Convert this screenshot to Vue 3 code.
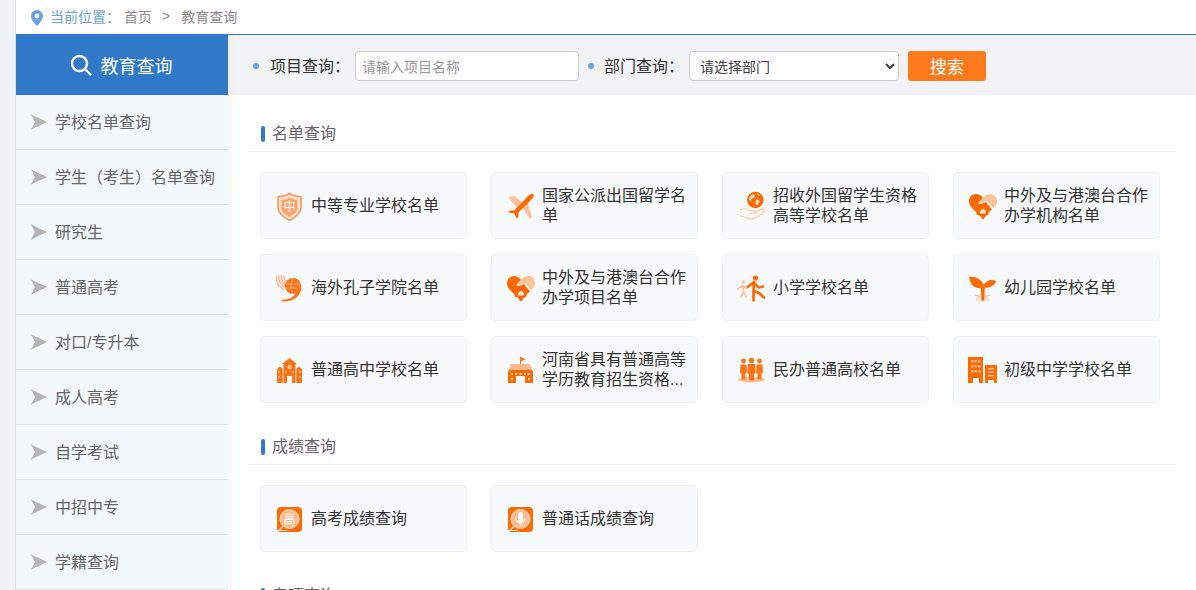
<script setup>
const sideItems = ['学校名单查询', '学生（考生）名单查询', '研究生', '普通高考', '对口/专升本', '成人高考', '自学考试', '中招中专', '学籍查询']
const sections = [
  {
    title: '名单查询',
    cards: [
      { icon: 'shield', text: '中等专业学校名单' },
      { icon: 'plane', text: '国家公派出国留学名单' },
      { icon: 'globe', text: '招收外国留学生资格高等学校名单' },
      { icon: 'heart', text: '中外及与港澳台合作办学机构名单' },
      { icon: 'swirl', text: '海外孔子学院名单' },
      { icon: 'heart', text: '中外及与港澳台合作办学项目名单' },
      { icon: 'run', text: '小学学校名单' },
      { icon: 'sprout', text: '幼儿园学校名单' },
      { icon: 'school', text: '普通高中学校名单' },
      { icon: 'flagschool', text: '河南省具有普通高等学历教育招生资格...' },
      { icon: 'people', text: '民办普通高校名单' },
      { icon: 'tower', text: '初级中学学校名单' }
    ]
  },
  {
    title: '成绩查询',
    cards: [
      { icon: 'gao', text: '高考成绩查询' },
      { icon: 'mic', text: '普通话成绩查询' }
    ]
  },
  { title: '专项查询', cards: [] }
]
</script>

<template>
  <div class="page">
    <div class="strip"></div>
    <div class="frame">
      <div class="crumb">
        <svg class="pin" width="12" height="16" viewBox="0 0 12 16">
          <path fill="#6aa3de" fill-rule="evenodd" d="M6 0a6 6 0 0 1 6 6c0 3.600-4 8-6 10C4 14 0 9.600 0 6a6 6 0 0 1 6-6zm0 3.600a2.400 2.400 0 1 0 0 4.800 2.400 2.400 0 0 0 0-4.800z"/>
        </svg>
        <span class="crumb-text">
          <span class="crumb-label">当前位置：</span>
          <span class="crumb-link">首页</span>
          <span class="crumb-sep">&gt;</span>
          <span class="crumb-link">教育查询</span>
        </span>
      </div>
      <div class="body">
        <aside class="side">
          <div class="side-head">
            <svg width="22" height="22" viewBox="0 0 22 22" fill="none" stroke="#fff" stroke-width="2.400" stroke-linecap="round">
              <circle cx="9.500" cy="9.500" r="7.500"/>
              <path d="M15.500 15.500l4.800 4.800"/>
            </svg>
            <span>教育查询</span>
          </div>
          <div v-for="item in sideItems" :key="item" class="side-item">
            <svg width="16" height="16" viewBox="0 0 16 16"><path fill="#b4b4b4" d="M0 .5 16 8 0 15.500 4 8z"/></svg>
            <span class="side-text">{{ item }}</span>
          </div>
        </aside>
        <main class="main">
          <div class="search">
            <i class="dot"></i>
            <label class="lbl">项目查询：</label>
            <input class="inp" placeholder="请输入项目名称" />
            <i class="dot dot2"></i>
            <label class="lbl">部门查询：</label>
            <select class="sel"><option>请选择部门</option></select>
            <button class="btn">搜索</button>
          </div>
          <div class="content">
            <section v-for="s in sections" :key="s.title" class="sec">
              <h3 class="sec-head"><i class="bar"></i><span class="sec-title">{{ s.title }}</span></h3>
              <div v-if="s.cards.length" class="grid">
                <div v-for="c in s.cards" :key="c.text" class="card">
                  <svg class="ic" width="30" height="30" viewBox="0 0 30 30">
                    <template v-if="c.icon === 'shield'">
                      <path fill="#ffe2cf" stroke="#ff9a5c" stroke-width="1.600" d="M14.500 2.500c3 2.200 6.500 3 11.500 3.200v10.500c0 6-5 9.800-11.500 13.300C8 26 3 22.200 3 16.200V5.700C8 5.500 11.500 4.700 14.500 2.500z"/>
                      <path fill="#ffa670" d="M14.500 6.500c2.500 1.500 5 2.200 8 2.400v7.500c0 4.200-3.300 7-8 9.500-4.700-2.500-8-5.300-8-9.500V8.900c3-.2 5.500-.9 8-2.400z"/>
                      <text x="14.500" y="20" text-anchor="middle" class="ictxt" font-size="12" fill="#fff">中</text>
                    </template>
                    <template v-else-if="c.icon === 'plane'">
                      <path fill="#ffc19a" d="M2 6l6-1 11 8-6 6zM16.500 17l5-5.500L26 26l-2 2z"/>
                      <path fill="#ff6a00" d="M27.200 3c1.300 1 .3 3.400-1.200 5L12.500 21.500l-.2 4.700-1.600 1.300-2.400-5-6.300-1.200 1.500-1.600 4.700-.2L22 5c1.500-1.500 4-3 5.200-2z"/>
                    </template>
                    <template v-else-if="c.icon === 'globe'">
                      <circle cx="18.300" cy="9" r="8.300" fill="#ff6a00"/>
                      <path fill="#ffe2cf" d="M14.500 3.500l3.500.5-.5 2.500-2.500 1-1.500 3-1.500-3zM19 8l3 1 .5 2-2.500 3.500-1.500-1.500zM20.500 2.500l2.500 1.500-1.500 1z"/>
                      <path fill="none" stroke="#ffc7a3" stroke-width="1.100" stroke-linejoin="round" d="M3 19c3-2 6-1.500 9 0l5 1c2 .2 2 2.200 0 2.200h-5M17 21l8-3c2-.5 3 1 2 2-3 4-7 7-12 8-4 0-8-3-12-3"/>
                    </template>
                    <template v-else-if="c.icon === 'heart'">
                      <path fill="#ff6a00" d="M15 7C13 4 10.500 3 8 3 4 3 1 6 1 10c0 3 1.500 5 3 7l4 4 1 3 3 .5 2 3.500h2l1.500-3 2.500-1 1-3 3-2.500-6-7.500-5 2-3-1z"/>
                      <path fill="#ffc19a" d="M15 7c2-3 5-4 7.500-4C26 3 29 6 29 10c0 3-1.500 5-3.500 7L19 10l-6 2-2-1z"/>
                      <path fill="#ffe2cf" d="M15 17.500l3 2.500v2.500h-6V20z"/>
                    </template>
                    <template v-else-if="c.icon === 'swirl'">
                      <path fill="none" stroke="#ffb98c" stroke-width="1.500" stroke-linecap="round" d="M1.500 3.500c-.5 5 2 10 7 13M4 3c-.5 4 1.500 8.500 5.500 11M6.500 2.500c-.5 3.500 1 7 4 9.500M9 3c-.5 3 .5 5 2.500 7"/>
                      <circle cx="18" cy="13" r="8" fill="#ff7417"/>
                      <path fill="none" stroke="#ffc19a" stroke-width=".7" d="M11 11h14M10.500 15h15M18 5c-2.500 5-2.500 11 0 16"/>
                      <path fill="#ff7417" d="M26 12c1.500 8-4 16.500-18 16.500-2 0-1.500-1.500 0-2 7 0 11-2.500 12.500-6.500z"/>
                    </template>
                    <template v-else-if="c.icon === 'run'">
                      <circle cx="18.500" cy="5" r="2.600" fill="#ff6a00"/>
                      <path fill="none" stroke="#ff6a00" stroke-width="2.600" stroke-linecap="round" stroke-linejoin="round" d="M10 14.500l7-5.500-.5 8.500 6 3 4.500 4M17 9.500l4.500 5 4.500-1M16.500 17.500l0 10"/>
                      <circle cx="6.300" cy="9" r="1.800" fill="#ffc19a"/>
                      <path fill="none" stroke="#ffc19a" stroke-width="1.700" stroke-linecap="round" d="M1 16l5-3.500 4 3M6 12.500l.5 6-2.500 5M6.500 18.500l2.500 5.500"/>
                    </template>
                    <template v-else-if="c.icon === 'sprout'">
                      <path fill="none" stroke="#ffc19a" stroke-width="1.100" d="M8 27c2.500-1 4-3 4.500-6M6.500 22c2 .8 4 1.500 6 1.500M21 27c-2.500-1-4-3-4.500-6M22.500 22c-2 .8-4 1.500-6 1.500"/>
                      <path fill="#ffc19a" d="M10 27.500h9v.8h-9z"/>
                      <path fill="#ff6a00" d="M1 4c6.500-1 13 2.500 15 9-3 4-13 3.500-15-9zM15 13c3-6 9-7 13-5-1 5-8 8-13 6z"/>
                      <path fill="#ff6a00" d="M12.800 12h4.100l-.6 15.500h-2.900z"/>
                    </template>
                    <template v-else-if="c.icon === 'school'">
                      <path fill="#ff7417" d="M14.500 3l7.500 6h-1.500v19h-12V9H7z"/>
                      <path fill="#ff7417" d="M2 14l3-2.500L7.700 14v14H2zM27 14l-3-2.500-2.700 2.500v14H27z"/>
                      <circle cx="14.500" cy="12" r="2.300" fill="#ffc19a"/>
                      <path fill="#fff" d="M12 21h5v7h-5z"/>
                      <path fill="#ffc19a" d="M3.500 16h1.500v2H3.500zM3.500 21h1.500v2H3.500zM24 16h1.500v2H24zM24 21h1.500v2H24zM10 16h1.500v2H10zM17.500 16h1.500v2h-1.500z"/>
                    </template>
                    <template v-else-if="c.icon === 'flagschool'">
                      <path fill="none" stroke="#ff7417" stroke-width="1" d="M14.500 2v8"/>
                      <path fill="#ff7417" d="M15 2l4.500 2.300L15 6.500z"/>
                      <path fill="#ffb98c" d="M5 9h19l2 6H3z"/>
                      <path fill="#ff6a00" d="M3 15h23l1 2v11h-8v-7h-9v7H2V17z"/>
                      <path fill="#ffd9bf" d="M5 18h2v2H5zM9 18h2v2H9zM13.500 18h2v2h-2zM18 18h2v2h-2zM22 18h2v2h-2zM5 23h2v2H5zM22 23h2v2h-2z"/>
                    </template>
                    <template v-else-if="c.icon === 'people'">
                      <ellipse cx="14.500" cy="24.500" rx="13.500" ry="3" fill="#ffc19a"/>
                      <g fill="#ff7417">
                        <circle cx="6.500" cy="6" r="2.400"/><circle cx="14.500" cy="5.500" r="2.700"/><circle cx="22.500" cy="6" r="2.400"/>
                        <path d="M3.500 9.500h6l.5 8-1.500 1v6H4.500v-6l-1.500-1zM11 9h7l.8 9-1.800 1v6.500h-5V19l-1.800-1zM19.500 9.500h6l.5 8-1.500 1v6h-4v-6l-1.500-1z"/>
                      </g>
                    </template>
                    <template v-else-if="c.icon === 'tower'">
                      <path fill="#ff6a00" d="M0 2h15v26h-4v-5H5v5H0z"/>
                      <path fill="#ff6a00" d="M17 10h12v18h-3v-3h-6v3h-3z"/>
                      <path fill="#ffb98c" d="M3 5h2.500v2.500H3zM6.500 5H9v2.500H6.500zM10 5h2.500v2.500H10zM3 10h2.500v2.500H3zM6.500 10H9v2.500H6.500zM10 10h2.500v2.500H10zM3 15h2.500v2.500H3zM6.500 15H9v2.500H6.500zM10 15h2.500v2.500H10zM20 13h6v1.500h-6zM20 16.500h6V18h-6zM20 20h6v1.500h-6z"/>
                    </template>
                    <template v-else-if="c.icon === 'gao' || c.icon === 'mic'">
                      <rect x="2" y="3" width="25" height="25" rx="4" fill="#ff6a00"/>
                      <circle cx="14.500" cy="15" r="9.500" fill="#ffbc91" stroke="#ffe2cd" stroke-width="1"/>
                      <path fill="none" stroke="#ffe2cd" stroke-width="1.200" d="M8 22l-4 4.500h8"/>
                      <text v-if="c.icon === 'gao'" x="14.500" y="19.500" text-anchor="middle" class="ictxt" font-size="12" fill="#fff">高</text>
                      <template v-else>
                        <rect x="12" y="8" width="5" height="10" rx="2.500" fill="#fff"/>
                        <path fill="none" stroke="#fff" stroke-width="1.200" d="M10 14c0 3 2 5 4.500 5s4.500-2 4.500-5M14.500 19v3"/>
                      </template>
                    </template>
                  </svg>
                  <span class="card-text">{{ c.text }}</span>
                </div>
              </div>
            </section>
          </div>
        </main>
      </div>
    </div>
  </div>
</template>

<style>
html, body { margin: 0; height: 100%; overflow: hidden; background: #fff; }
</style>

<style scoped>
.page {
  display: flex;
  height: 590px;
  overflow: hidden;
  font-family: "Liberation Sans", "Noto Sans CJK SC", sans-serif;
}
.strip { width: 15px; flex: none; background: #eef1f6; border-right: 1px solid #dfe3e9; }
.frame { flex: 1; min-width: 0; display: flex; flex-direction: column; }
.crumb {
  height: 34px;
  flex: none;
  display: flex;
  align-items: center;
  padding-left: 15px;
  font-size: 14px;
  border-bottom: 1px solid #3079c9;
}
.pin { margin-right: 7px; margin-top: 1px; }
.crumb-text { display: flex; margin-bottom: 3px; }
.crumb-label { color: #6aa3de; margin-right: 4px; }
.crumb-link { color: #8c8c8c; }
.crumb-sep { color: #8c8c8c; margin: 2px 11px 0 10px; }
.body { flex: 1; display: flex; min-height: 0; }
.side { width: 212px; flex: none; background: #f3f8fc; position: relative; z-index: 1; box-shadow: 4px 0 8px rgba(0, 0, 0, .03); }
.side-head {
  height: 60px;
  box-sizing: border-box;
  padding-right: 2px;
  background: #3079c9;
  color: #fff;
  font-size: 18px;
  display: flex;
  align-items: center;
  justify-content: center;
  gap: 9px;
}
.side-item {
  height: 54px;
  border-bottom: 1px solid #dfe4ea;
  display: flex;
  align-items: center;
  padding-left: 15px;
  gap: 8px;
  font-size: 16px;
  color: #666;
}
.side-text { margin-bottom: 2px; }
.main { flex: 1; min-width: 0; display: flex; flex-direction: column; }
.search {
  height: 60px;
  flex: none;
  box-sizing: border-box;
  padding: 2px 0 0 25px;
  background: #f2f3f5;
  display: flex;
  align-items: center;
  font-size: 16px;
  color: #333;
}
.dot { width: 6px; height: 6px; border-radius: 50%; background: #6aa3de; margin-right: 11px; }
.dot2 { margin-left: 9px; margin-right: 10px; }
.lbl { width: 75px; margin-right: 10px; margin-bottom: 3px; white-space: nowrap; }
.inp {
  width: 224px;
  height: 30px;
  box-sizing: border-box;
  border: 1px solid #ccc;
  border-radius: 4px;
  padding: 1px 6px 0;
  font: 14px "Liberation Sans", "Noto Sans CJK SC", sans-serif;
  background: #fff;
  outline: none;
}
.inp::placeholder { color: #999; }
.sel {
  width: 210px;
  height: 30px;
  box-sizing: border-box;
  border: 1px solid #ccc;
  border-radius: 4px;
  padding: 2px 6px 0;
  font: 14px "Liberation Sans", "Noto Sans CJK SC", sans-serif;
  color: #444;
  background-color: #fff;
  outline: none;
}
.btn {
  width: 78px;
  height: 30px;
  margin-left: 9px;
  border: 0;
  border-radius: 3px;
  background: #ff7a1c;
  color: #fff;
  font: 17px "Liberation Sans", "Noto Sans CJK SC", sans-serif;
  padding: 0 0 2px;
}
.content { padding: 0 20px; }
.sec { padding-top: 21px; margin-bottom: 11px; }
.sec + .sec { padding-top: 0; margin-top: 26px; }
.sec-head {
  margin: 0;
  height: 35px;
  border-bottom: 1px solid #eef0f2;
  display: flex;
  align-items: center;
  padding-left: 13px;
  gap: 7px;
  font-size: 16px;
  font-weight: 400;
  color: #666;
}
.sec-title { margin-bottom: 3px; }
.bar { width: 4px; height: 16px; border-radius: 2px; background: #3079c9; }
.grid {
  display: grid;
  grid-template-columns: repeat(4, 207px);
  column-gap: 24px;
  row-gap: 15px;
  padding: 20px 0 0 12px;
}
.card {
  height: 67px;
  box-sizing: border-box;
  background: #f8f9fb;
  border: 1px solid #eef0f2;
  border-radius: 5px;
  display: flex;
  align-items: center;
  padding: 0 10px 0 14px;
  gap: 6px;
}
.ic { flex: none; }
.ictxt { font-family: "Noto Sans CJK SC", sans-serif; }
.card-text {
  font-size: 16px;
  line-height: 20px;
  color: #333;
}
</style>
